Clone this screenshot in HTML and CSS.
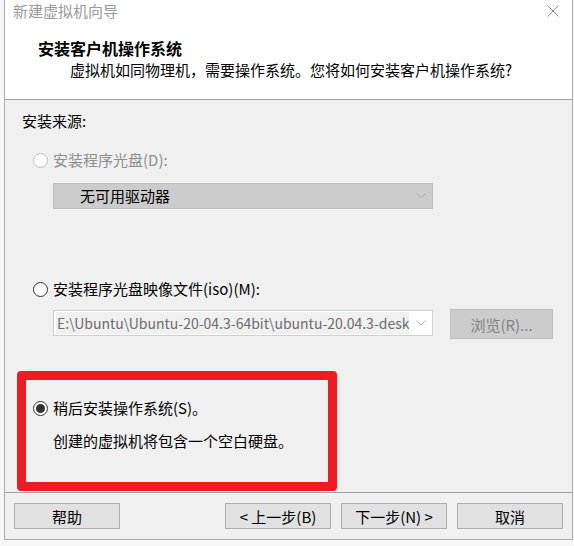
FILE: index.html
```html
<!DOCTYPE html>
<html lang="zh-CN">
<head>
<meta charset="utf-8">
<title>新建虚拟机向导</title>
<link rel="stylesheet" href="styles.css">
</head>
<body>
<div class="window">
  <div class="titlebar">
    <span class="title">新建虚拟机向导</span>
    <svg class="close" width="12" height="12" viewBox="0 0 12 12"><path d="M0.5 0.5 L11.5 11.5 M11.5 0.5 L0.5 11.5" stroke="#8a8a8a" stroke-width="1" fill="none"/></svg>
  </div>
  <div class="header">
    <div class="heading">安装客户机操作系统</div>
    <div class="subtitle">虚拟机如同物理机，需要操作系统。您将如何安装客户机操作系统?</div>
  </div>
  <div class="body">
    <div class="content">
      <div class="source">安装来源:</div>
      <div class="option option-disc disabled"><span class="radio"></span><span class="opt-label">安装程序光盘(D):</span></div>
      <div class="select select-disabled">
        <span class="select-text">无可用驱动器</span>
        <svg class="chevron" width="10" height="6" viewBox="0 0 10 6"><path d="M0.5 0.5 L5 5 L9.5 0.5" stroke="#a8a8a8" stroke-width="1" fill="none"/></svg>
      </div>
      <div class="option option-iso"><span class="radio"></span><span class="opt-label">安装程序光盘映像文件(iso)(M):</span></div>
      <div class="iso-row">
        <div class="select select-iso">
          <span class="path">E:\Ubuntu\Ubuntu-20-04.3-64bit\ubuntu-20.04.3-desk</span>
          <svg class="chevron" width="10" height="6" viewBox="0 0 10 6"><path d="M0.5 0.5 L5 5 L9.5 0.5" stroke="#b4b4b4" stroke-width="1" fill="none"/></svg>
        </div>
        <button class="browse">浏览(R)...</button>
      </div>
      <div class="highlight">
        <div class="option option-later"><span class="radio checked"></span><span class="opt-label">稍后安装操作系统(S)。</span></div>
        <div class="desc">创建的虚拟机将包含一个空白硬盘。</div>
      </div>
    </div>
    <div class="footer">
      <button class="btn">帮助</button>
      <div class="spacer"></div>
      <button class="btn">&lt; 上一步(B)</button>
      <button class="btn">下一步(N) &gt;</button>
      <button class="btn">取消</button>
    </div>
  </div>
</div>
</body>
</html>
```
FILE: styles.css
```css
* { box-sizing: border-box; }
html, body { margin: 0; padding: 0; }
body {
  background: #f7f7f7;
  font-family: "Noto Sans CJK SC", "Noto Sans", sans-serif;
  font-size: 15px;
  line-height: 20px;
  color: #000;
  width: 574px;
  height: 546px;
  overflow: hidden;
}
.window {
  margin-left: 4px;
  width: 569px;
  border-left: 1px solid #ababab;
  border-right: 1px solid #ababab;
  border-bottom: 1px solid #ababab;
  background: #fff;
}
.titlebar {
  height: 22px;
  display: flex;
  align-items: center;
  justify-content: space-between;
  padding-left: 8px;
  padding-right: 13px;
}
.title {
  color: #9a9a9a;
  font-size: 15px;
  line-height: 22px;
}
.close { display: block; }
.header {
  background: #fff;
  padding-top: 15px;
  padding-bottom: 18px;
  border-bottom: 1px solid #a0a0a0;
}
.heading {
  font-weight: bold;
  font-size: 16px;
  line-height: 22px;
  padding-left: 33px;
}
.subtitle {
  line-height: 22px;
  padding-left: 65px;
}
.body {
  background: #f0f0f0;
}
.content {
  padding-top: 11px;
  padding-bottom: 1px;
}
.source {
  margin-left: 17px;
}
.option {
  display: flex;
  align-items: center;
  height: 20px;
}
.option-disc { margin-top: 19px; margin-left: 28px; }
.option-iso { margin-top: 70px; margin-left: 28px; }
.radio {
  width: 15px;
  height: 15px;
  border-radius: 50%;
  border: 1px solid #333;
  background: #fff;
  margin-right: 5px;
  display: flex;
  align-items: center;
  justify-content: center;
  flex: none;
}
.disabled .radio {
  border-color: #bcbcbc;
  background: #fcfcfc;
}
.disabled .opt-label { color: #8d8d8d; }
.radio.checked::after {
  content: "";
  width: 9px;
  height: 9px;
  border-radius: 50%;
  background: #333;
}
.select {
  width: 380px;
  height: 26px;
  display: flex;
  align-items: center;
  justify-content: space-between;
  border: 1px solid #c4c4c4;
  padding-right: 6px;
}
.select-disabled {
  margin-top: 13px;
  margin-left: 48px;
  background: #cccccc;
  border-color: #bfbfbf;
  padding-left: 26px;
}
.iso-row {
  display: flex;
  align-items: flex-start;
  margin-top: 10px;
  margin-left: 48px;
}
.select-iso {
  margin-top: 1px;
  background: #fff;
  border-color: #cfcfcf;
  padding-left: 2px;
}
.path {
  width: 353px;
  height: 22px;
  line-height: 22px;
  font-size: 14px;
  background: #f0f0f0;
  color: #6d6d6d;
  white-space: nowrap;
  overflow: hidden;
  padding-left: 1px;
}
.chevron { display: block; flex: none; }
.browse {
  margin-left: 17px;
  width: 103px;
  height: 30px;
  background: #cccccc;
  border: 1px solid #bfbfbf;
  color: #838383;
  font-family: inherit;
  font-size: 15px;
  padding: 0;
}
.highlight {
  margin-top: 32px;
  margin-left: 12px;
  width: 320px;
  height: 120px;
  border: 9px solid #ed1c24;
  border-radius: 4px;
  padding-top: 18px;
  padding-left: 7px;
}
.desc {
  margin-top: 13px;
  padding-left: 20px;
}
.footer {
  border-top: 1px solid #a0a0a0;
  display: flex;
  gap: 10px;
  padding: 10px 9px 10px 9px;
}
.spacer { flex: 1; }
.btn {
  width: 106px;
  height: 26px;
  background: #e1e1e1;
  border: 1px solid #adadad;
  font-family: inherit;
  font-size: 15px;
  color: #000;
  padding: 0;
}
```
